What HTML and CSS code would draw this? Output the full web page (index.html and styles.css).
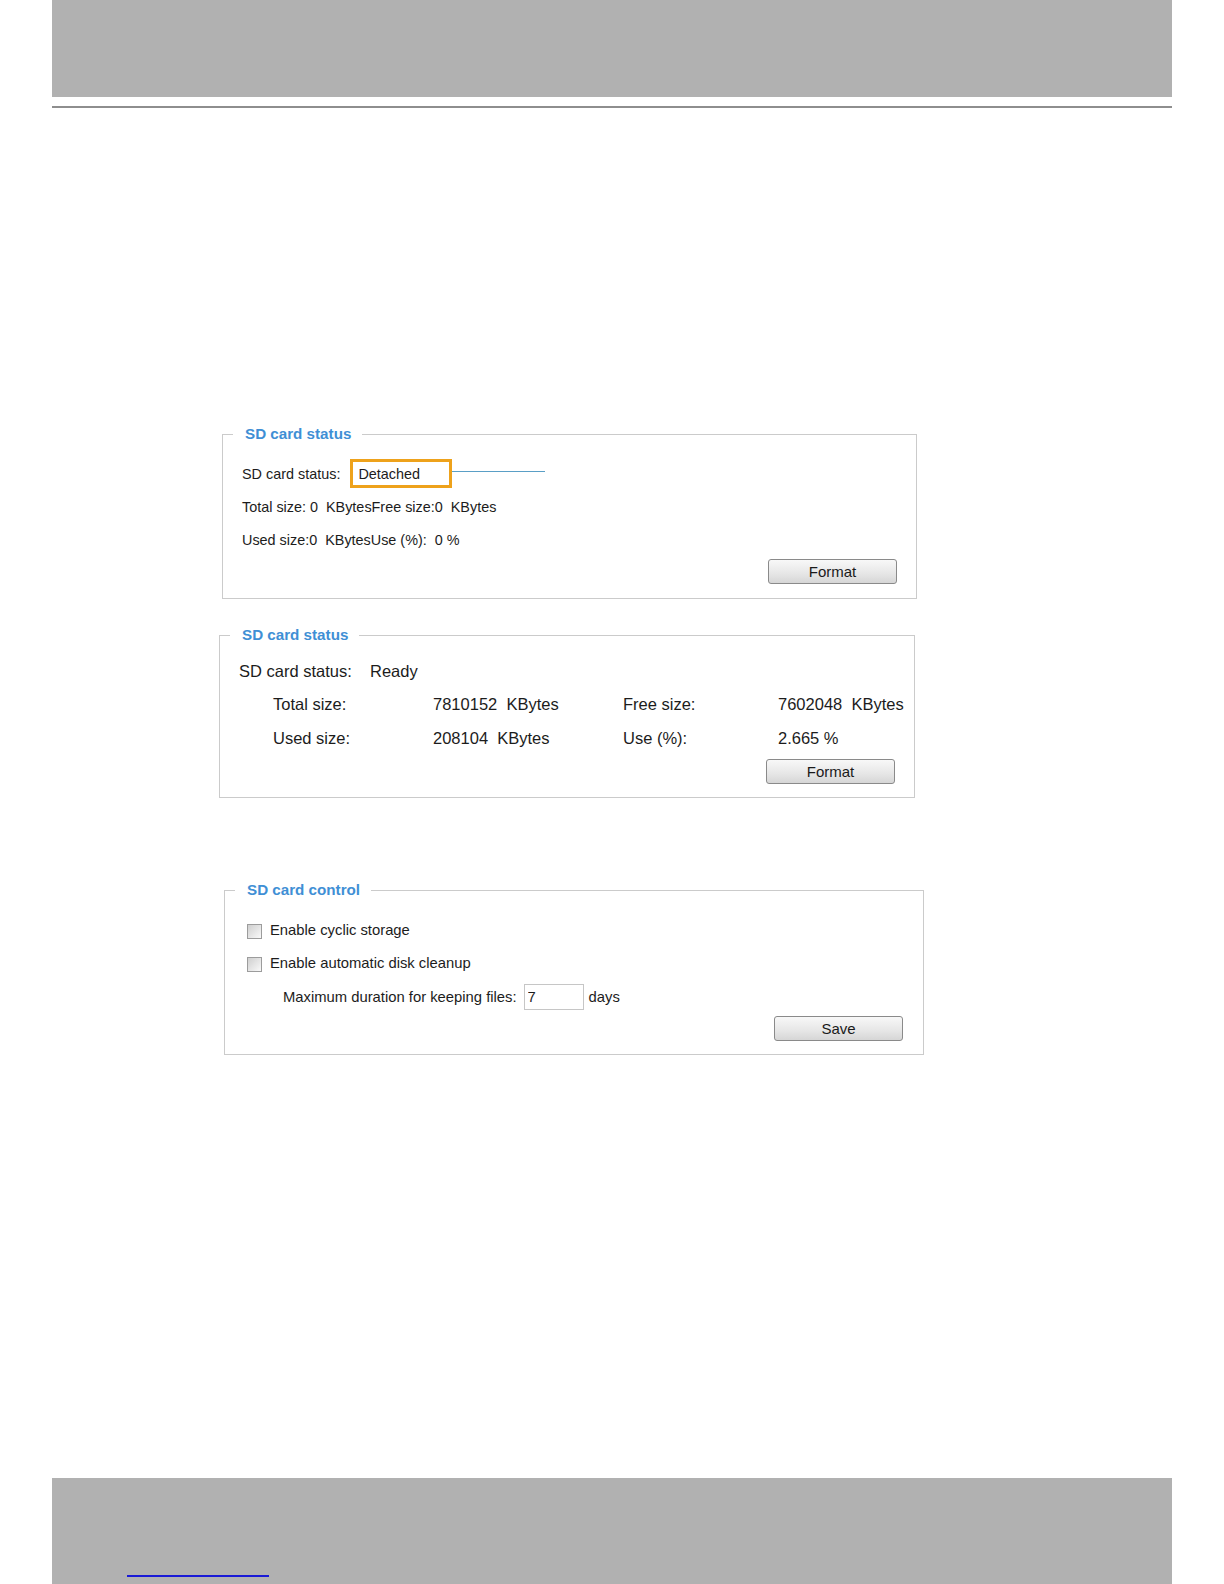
FILE: index.html
```html
<!DOCTYPE html>
<html lang="en">
<head>
    <meta charset="UTF-8">
    <meta name="viewport" content="width=device-width, initial-scale=1.0">
    <title>SD card management</title>
    <link rel="stylesheet" href="styles.css">
</head>
<body>
    <div class="page-header"></div>
    <div class="header-rule"></div>

    <!-- status when no card is inserted -->
    <fieldset class="panel panel-detached">
        <legend>SD card status</legend>
        <div class="panel-body small">
            <div class="row">
                <span>SD card status:</span>
                <span class="status-box">Detached</span>
                <span class="callout"></span>
            </div>
            <div class="row">Total size: 0  KBytesFree size:0  KBytes</div>
            <div class="row">Used size:0  KBytesUse (%):  0 %</div>
            <div class="actions">
                <button class="btn">Format</button>
            </div>
        </div>
    </fieldset>

    <!-- status with a card ready -->
    <fieldset class="panel panel-ready">
        <legend>SD card status</legend>
        <div class="panel-body large">
            <div class="row row-tall">
                <span class="field-label">SD card status:</span>
                <span>Ready</span>
            </div>
            <div class="size-grid">
                <span>Total size:</span>
                <span>7810152  KBytes</span>
                <span>Free size:</span>
                <span>7602048  KBytes</span>
                <span>Used size:</span>
                <span>208104  KBytes</span>
                <span>Use (%):</span>
                <span>2.665 %</span>
            </div>
            <div class="actions actions-ready">
                <button class="btn">Format</button>
            </div>
        </div>
    </fieldset>

    <fieldset class="panel panel-control">
        <legend>SD card control</legend>
        <div class="panel-body control">
            <label class="row">
                <input type="checkbox" class="check">
                <span>Enable cyclic storage</span>
            </label>
            <label class="row">
                <input type="checkbox" class="check">
                <span>Enable automatic disk cleanup</span>
            </label>
            <div class="row row-keep">
                <span>Maximum duration for keeping files:</span>
                <input type="text" class="days-input" value="7">
                <span class="days">days</span>
            </div>
            <div class="actions actions-control">
                <button class="btn">Save</button>
            </div>
        </div>
    </fieldset>

    <div class="page-footer">
        <a class="footer-link" href="#"></a>
    </div>
</body>
</html>
```

FILE: styles.css
```css
body {
    margin: 0;
    min-height: 100vh;
    display: flex;
    flex-direction: column;
    background-color: #fff;
    font-family: "Liberation Sans", Arial, sans-serif;
    color: #1c1c1c;
}
.page-header {
    height: 97px;
    margin: 0 52px;
    background-color: #b1b1b1;
}
.header-rule {
    height: 2px;
    margin: 9px 52px 0;
    background-color: #8e8e8e;
}
.panel {
    box-sizing: border-box;
    min-width: 0;
    margin: 0;
    padding: 0;
    border: 1px solid #cbcbcb;
}
.panel legend {
    margin-left: 10px;
    padding: 0 11px 0 12px;
    font-size: 15.2px;
    font-weight: bold;
    line-height: 18px;
    color: #3f8fd5;
}
.panel-detached {
    width: 695px;
    margin: 317px 0 0 222px;
}
.panel-ready {
    width: 696px;
    margin: 27px 0 0 219px;
}
.panel-control {
    width: 700px;
    margin: 83px 0 0 224px;
}
.panel-body {
    display: flex;
    flex-direction: column;
    padding: 14px 19px 14px;
    white-space: pre;
}
.small {
    font-size: 14.4px;
}
.large {
    font-size: 16.5px;
    padding: 10px 19px 13px;
}
.control {
    font-size: 14.8px;
    padding: 14px 20px 13px 22px;
}
.row {
    display: flex;
    align-items: center;
    height: 33px;
}
.row-tall {
    height: 34px;
}
.row-keep {
    height: 35px;
    padding-left: 36px;
}
.status-box {
    box-sizing: border-box;
    display: flex;
    align-items: center;
    width: 102px;
    height: 29px;
    margin-left: 10px;
    padding-left: 5px;
    border: 3px solid #eea21b;
}
.callout {
    width: 93px;
    height: 1px;
    margin-bottom: 5px;
    background-color: #5a9fc6;
}
.field-label {
    width: 131px;
}
.size-grid {
    display: grid;
    grid-template-columns: 160px 190px 155px auto;
    grid-template-rows: 33px 34px;
    align-items: center;
    margin-left: 34px;
}
.check {
    appearance: none;
    box-sizing: border-box;
    width: 15px;
    height: 15px;
    margin: 3px 8px 0 0;
    border: 1px solid #9c9c9c;
    background: linear-gradient(135deg, #cfcfcf, #f9f9f9);
}
.days-input {
    box-sizing: border-box;
    width: 60px;
    height: 26px;
    margin-left: 7px;
    padding: 0 3px;
    border: 1px solid #c6c6c6;
    font-family: inherit;
    font-size: 14.8px;
    color: #1c1c1c;
}
.days {
    margin-left: 5px;
}
.actions {
    display: flex;
    justify-content: flex-end;
    margin-top: 3px;
}
.actions-ready {
    margin-top: 4px;
}
.actions-control {
    margin-top: 2px;
}
.btn {
    width: 129px;
    height: 25px;
    padding: 0;
    border: 1px solid #8a8a8a;
    border-radius: 3px;
    background: linear-gradient(#f8f8f8, #e6e6e6 60%, #d6d6d6);
    font-family: "Liberation Sans", Arial, sans-serif;
    font-size: 15px;
    color: #1a1a1a;
    cursor: pointer;
}
.page-footer {
    height: 106px;
    margin: auto 52px 0;
    background-color: #b1b1b1;
    overflow: hidden;
}
.footer-link {
    display: block;
    width: 142px;
    height: 2px;
    margin: 97px 0 0 75px;
    background-color: #1a1ad6;
}
```
